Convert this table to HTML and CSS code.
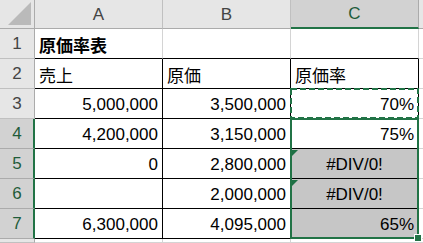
FILE: index.html
```html
<!DOCTYPE html>
<html lang="ja">
<head>
<meta charset="utf-8">
<link rel="stylesheet" href="styles.css">
</head>
<body>
<div class="sheet">
  <div class="grid">
    <div class="corner"><svg class="corner-tri" width="23" height="23" viewBox="0 0 23 23"><polygon points="0,23 23,23 23,0" fill="#bababa"/></svg></div>
    <div class="ch">A</div>
    <div class="ch">B</div>
    <div class="ch ch-sel">C</div>
    <div class="ch ch-end"></div>

    <div class="rh">1</div>
    <div class="c r1 title">原価率表</div>
    <div class="c r1"></div>
    <div class="c r1"></div>
    <div class="c"></div>

    <div class="rh">2</div>
    <div class="c t">売上</div>
    <div class="c t">原価</div>
    <div class="c t">原価率</div>
    <div class="c"></div>

    <div class="rh">3</div>
    <div class="c t num">5,000,000</div>
    <div class="c t num">3,500,000</div>
    <div class="c t num">70%</div>
    <div class="c"></div>

    <div class="rh rh-sel">4</div>
    <div class="c t num">4,200,000</div>
    <div class="c t num">3,150,000</div>
    <div class="c t num">75%</div>
    <div class="c"></div>

    <div class="rh rh-sel">5</div>
    <div class="c t num">0</div>
    <div class="c t num">2,800,000</div>
    <div class="c t ctr sel err">#DIV/0!</div>
    <div class="c"></div>

    <div class="rh rh-sel">6</div>
    <div class="c t num"></div>
    <div class="c t num">2,000,000</div>
    <div class="c t ctr sel err">#DIV/0!</div>
    <div class="c"></div>

    <div class="rh rh-sel">7</div>
    <div class="c t num">6,300,000</div>
    <div class="c t num">4,095,000</div>
    <div class="c t num sel">65%</div>
    <div class="c"></div>

    <div class="rh"></div>
    <div class="c"></div>
    <div class="c"></div>
    <div class="c"></div>
    <div class="c"></div>
  </div>
  <svg class="marquee" width="129" height="31" viewBox="0 0 129 31"><rect x="1" y="1" width="127" height="29" fill="none" stroke="#217346" stroke-width="2" stroke-dasharray="6 3"/></svg>
  <div class="selection"></div>
  <div class="handle"></div>
</div>
</body>
</html>
```
FILE: styles.css
```css
html, body {
  margin: 0;
  padding: 0;
  background: #ffffff;
}

.sheet {
  position: relative;
  width: 423px;
  height: 243px;
  overflow: hidden;
  font-family: "Liberation Sans", "Noto Sans CJK JP", sans-serif;
  font-size: 17px;
  color: #000;
}

.grid {
  display: grid;
  grid-template-columns: 35px 128px 128px 128px 1fr;
  grid-template-rows: 29px repeat(7, 30px) 1fr;
  width: 423px;
  height: 243px;
}

.grid > div {
  box-sizing: border-box;
}

.corner {
  background: #e6e6e6;
  border-right: 1px solid #ababab;
  border-bottom: 1px solid #ababab;
  display: flex;
  justify-content: flex-end;
  align-items: flex-end;
  padding: 0 3px 3px 0;
}

.corner-tri {
  display: block;
}

.ch {
  background: #e6e6e6;
  border-right: 1px solid #c0c0c0;
  border-bottom: 1px solid #ababab;
  color: #444;
  display: flex;
  align-items: center;
  justify-content: center;
  padding-top: 1px;
}

.ch-sel {
  background: #d2d2d2;
  color: #1f5c3a;
  border-bottom: 2px solid #217346;
  border-right-color: #ababab;
}

.ch-end {
  border-right: none;
}

.rh {
  background: #e6e6e6;
  border-right: 1px solid #ababab;
  border-bottom: 1px solid #c0c0c0;
  color: #444;
  display: flex;
  align-items: center;
  justify-content: center;
  padding-top: 1px;
}

.rh-sel {
  background: #d2d2d2;
  color: #1f5c3a;
  border-right: 2px solid #217346;
  border-bottom-color: #ababab;
  padding-left: 1px;
}

.c {
  position: relative;
  border-right: 1px solid #d4d4d4;
  border-bottom: 1px solid #d4d4d4;
  padding: 2px 4px 0 4px;
  display: flex;
  align-items: center;
  white-space: nowrap;
}

.r1 {
  border-bottom-color: #000;
}

.t {
  border-right-color: #000;
  border-bottom-color: #000;
}

.title {
  font-weight: bold;
}

.num {
  justify-content: flex-end;
}

.ctr {
  justify-content: center;
}

.sel {
  background: #c6c6c6;
}

.err::before {
  content: "";
  position: absolute;
  left: 1px;
  top: 1px;
  width: 0;
  height: 0;
  border-top: 6px solid #1e7145;
  border-right: 6px solid transparent;
}

.marquee {
  position: absolute;
  left: 290px;
  top: 88px;
  display: block;
}

.selection {
  position: absolute;
  left: 290px;
  top: 118px;
  width: 129px;
  height: 121px;
  box-sizing: border-box;
  border: 2px solid #217346;
}

.handle {
  position: absolute;
  left: 414px;
  top: 234px;
  width: 8px;
  height: 8px;
  box-sizing: border-box;
  background: #217346;
  border: 1px solid #fff;
}
```
